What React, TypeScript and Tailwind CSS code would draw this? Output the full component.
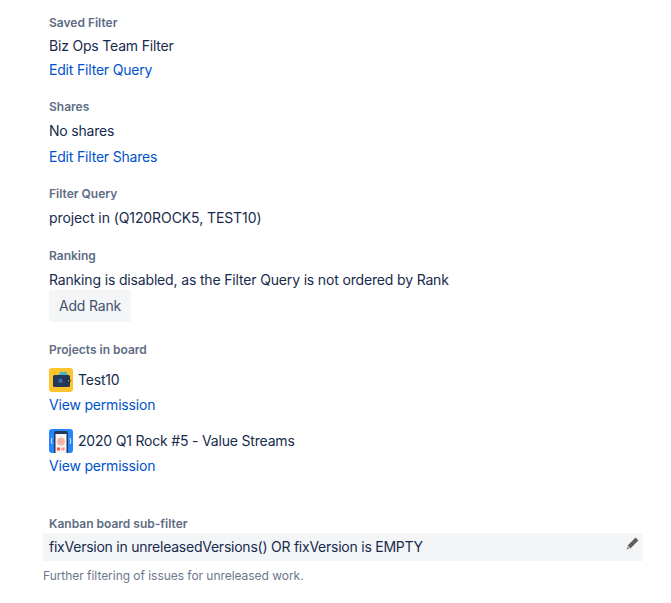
const font = "font-['Inter','Noto_Sans',sans-serif]";

function Label({ children, className = "" }: { children: React.ReactNode; className?: string }) {
  return <div className={`h-4 text-[12px] leading-4 font-semibold text-[#5e6c84] ${className}`}>{children}</div>;
}
function Value({ children, className = "tracking-[-0.19px]" }: { children: React.ReactNode; className?: string }) {
  return <div className={`text-[14px] leading-5 text-[#172b4d] ${className}`}>{children}</div>;
}
function LinkText({ children, className = "" }: { children: React.ReactNode; className?: string }) {
  return <a className={`block text-[14px] leading-5 tracking-[-0.19px] text-[#0052cc] ${className}`}>{children}</a>;
}

function WalletIcon() {
  return (
    <svg width="24" height="24" viewBox="0 0 24 24" className="shrink-0">
      <rect width="24" height="24" rx="3" fill="#ffc32b" />
      <path d="M9 7 L12 3.5 L15 4 L17 3.5 L19 7 Z" fill="#4fb3c8" />
      <rect x="4" y="7" width="17" height="12" rx="1.5" fill="#253858" />
      <circle cx="11.5" cy="12.7" r="2.2" fill="#3f6aa8" />
      <rect x="18" y="11.2" width="3.5" height="3" rx="1" fill="#1b2a45" />
      <circle cx="19.6" cy="12.7" r="0.7" fill="#ffc32b" />
    </svg>
  );
}
function PhoneIcon() {
  return (
    <svg width="24" height="24" viewBox="0 0 24 24" className="shrink-0">
      <rect width="24" height="24" rx="3" fill="#2684ff" />
      <path d="M5 24 V4 Q5 2 7 2 H17 Q19 2 19 4 V24 Z" fill="#253858" />
      <rect x="6.5" y="5" width="11" height="19" fill="#f4f5f7" />
      <circle cx="12" cy="12.5" r="3.9" fill="#f5b5a0" />
      <rect x="8" y="18.5" width="3" height="3" fill="#ff5630" />
      <rect x="12.5" y="18.5" width="3" height="3" fill="#ff8fa3" />
      <path d="M3 9 Q1.5 12 3 15 M21 9 Q22.5 12 21 15" stroke="#deebff" strokeWidth="1" fill="none" />
    </svg>
  );
}

export default function App() {
  return (
    <div className={`${font} w-[671px] h-[603px] overflow-hidden bg-white pt-[15px] pl-[49px] pr-7`}>
      <Label>Saved Filter</Label>
      <Value className="mt-[5px] tracking-[-0.19px]">Biz Ops Team Filter</Value>
      <LinkText className="mt-1">Edit Filter Query</LinkText>

      <Label className="mt-[19px]">Shares</Label>
      <Value className="mt-1.5 tracking-[-0.19px]">No shares</Value>
      <LinkText className="mt-1.5">Edit Filter Shares</LinkText>

      <Label className="mt-[19px]">Filter Query</Label>
      <Value className="mt-1.5 tracking-[-0.09px]">project in (Q120ROCK5, TEST10)</Value>

      <Label className="mt-5">Ranking</Label>
      <Value className="mt-1.5 tracking-[-0.16px]">Ranking is disabled, as the Filter Query is not ordered by Rank</Value>
      <button className="block h-8 w-[82px] rounded-[3px] bg-[#f4f5f7] text-center text-[14px] leading-8 tracking-[-0.19px] text-[#42526e]">
        Add Rank
      </button>

      <Label className="mt-5">Projects in board</Label>
      <div className="mt-2.5 flex h-6 items-center gap-[5px]">
        <WalletIcon />
        <Value>Test10</Value>
      </div>
      <LinkText className="mt-[3px]">View permission</LinkText>
      <div className="mt-3.5 flex h-6 items-center gap-[5px]">
        <PhoneIcon />
        <Value>2020 Q1 Rock #5 - Value Streams</Value>
      </div>
      <LinkText className="mt-[3px]">View permission</LinkText>

      <Label className="mt-10">Kanban board sub-filter</Label>
      <div className="-ml-1.5 mt-[1px] flex h-[28px] w-[600px] items-center justify-between bg-[#f4f5f7] pl-1.5 pr-[4px]">
        <Value className="tracking-[-0.24px]">fixVersion in unreleasedVersions() OR fixVersion is EMPTY</Value>
        <svg width="13" height="13" viewBox="0 0 13 13" className="mb-[7px]">
          <path d="M9.6 0.6 L12.4 3.4 L4.4 11.4 L1.6 8.6 Z" fill="#5e5e5e" />
          <path d="M1.2 9.4 L3.6 11.8 L0.6 12.4 Z" fill="#8a8a8a" />
        </svg>
      </div>
      <div className="-ml-1.5 mt-[7px] text-[12px] leading-4 tracking-[-0.04px] text-[#6b778c]">Further filtering of issues for unreleased work.</div>
    </div>
  );
}
